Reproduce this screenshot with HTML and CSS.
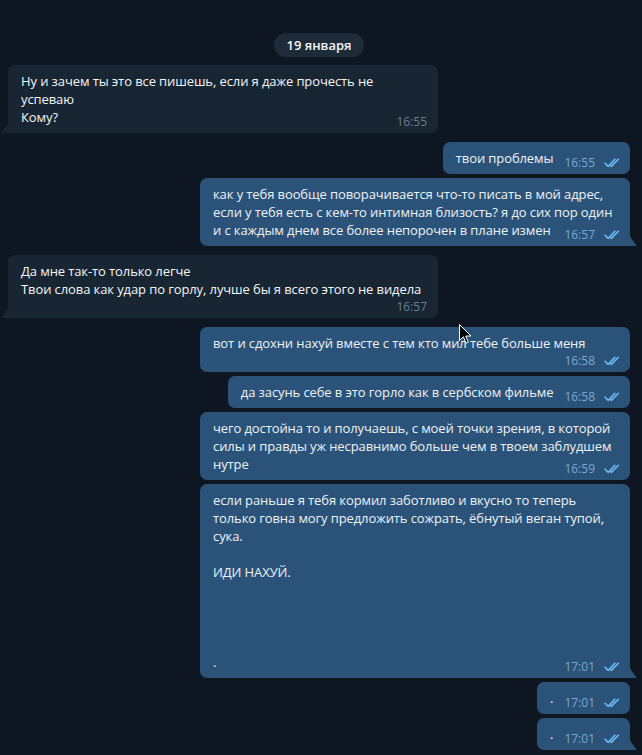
FILE: index.html
```
<!DOCTYPE html>
<html>
  <head>
    <meta charset="utf-8">
    <link rel="stylesheet" href="styles.css">
  </head>
  <body>
    <div class="chat">
      <div class="date"><span>19 января</span></div>

      <div class="msg in wide tail first">
        <p class="text">Ну и зачем ты это все пишешь, если я даже прочесть не<br>успеваю<br>Кому?<span class="meta"><span class="time">16:55</span></span></p>
      </div>

      <div class="msg out first">
        <p class="text">твои проблемы<span class="meta"><span class="time">16:55</span><svg class="check" viewBox="0 0 18 10"><path d="M1 5.2 L4.2 8.4 L10.8 1.4 M6.6 7.6 L7.4 8.4 L14.2 1.4"/></svg></span></p>
      </div>
      <div class="msg out wide tail">
        <p class="text">как у тебя вообще поворачивается что-то писать в мой адрес, если у тебя есть с кем-то интимная близость? я до сих пор один и с каждым днем все более непорочен в плане измен<span class="meta"><span class="time">16:57</span><svg class="check" viewBox="0 0 18 10"><path d="M1 5.2 L4.2 8.4 L10.8 1.4 M6.6 7.6 L7.4 8.4 L14.2 1.4"/></svg></span></p>
      </div>

      <div class="msg in wide tail first">
        <p class="text">Да мне так-то только легче<br>Твои слова как удар по горлу, лучше бы я всего этого не видела</p>
        <div class="meta-row"><span class="time">16:57</span></div>
      </div>

      <div class="msg out wide first">
        <p class="text">вот и сдохни нахуй вместе с тем кто мил тебе больше меня</p>
        <div class="meta-row"><span class="time">16:58</span><svg class="check" viewBox="0 0 18 10"><path d="M1 5.2 L4.2 8.4 L10.8 1.4 M6.6 7.6 L7.4 8.4 L14.2 1.4"/></svg></div>
      </div>
      <div class="msg out">
        <p class="text">да засунь себе в это горло как в сербском фильме<span class="meta"><span class="time">16:58</span><svg class="check" viewBox="0 0 18 10"><path d="M1 5.2 L4.2 8.4 L10.8 1.4 M6.6 7.6 L7.4 8.4 L14.2 1.4"/></svg></span></p>
      </div>
      <div class="msg out wide">
        <p class="text">чего достойна то и получаешь, с моей точки зрения, в которой силы и правды уж несравнимо больше чем в твоем заблудшем нутре<span class="meta"><span class="time">16:59</span><svg class="check" viewBox="0 0 18 10"><path d="M1 5.2 L4.2 8.4 L10.8 1.4 M6.6 7.6 L7.4 8.4 L14.2 1.4"/></svg></span></p>
      </div>
      <div class="msg out wide tail">
        <p class="text">если раньше я тебя кормил заботливо и вкусно то теперь только говна могу предложить сожрать, ёбнутый веган тупой, сука.<br><br>ИДИ НАХУЙ.<br><br><br><br><br>.<span class="meta"><span class="time">17:01</span><svg class="check" viewBox="0 0 18 10"><path d="M1 5.2 L4.2 8.4 L10.8 1.4 M6.6 7.6 L7.4 8.4 L14.2 1.4"/></svg></span></p>
      </div>
      <div class="msg out">
        <p class="text">.<span class="meta"><span class="time">17:01</span><svg class="check" viewBox="0 0 18 10"><path d="M1 5.2 L4.2 8.4 L10.8 1.4 M6.6 7.6 L7.4 8.4 L14.2 1.4"/></svg></span></p>
      </div>
      <div class="msg out tail">
        <p class="text">.<span class="meta"><span class="time">17:01</span><svg class="check" viewBox="0 0 18 10"><path d="M1 5.2 L4.2 8.4 L10.8 1.4 M6.6 7.6 L7.4 8.4 L14.2 1.4"/></svg></span></p>
      </div>
    </div>

    <svg class="cursor" viewBox="0 0 13 21" width="13" height="21">
      <path d="M0.5 0.5 L0.5 16.5 L4.4 12.8 L7 19.2 L9.3 18.2 L6.8 12 L12 12 Z"/>
    </svg>
  </body>
</html>
```

FILE: styles.css
```
body {
  margin: 0;
  min-height: 755px;
  background-color: #0e1621;
  font-family: "Open Sans", "Noto Sans", sans-serif;
  position: relative;
}

.chat {
  display: flex;
  flex-direction: column;
  padding: 33px 12px 0 8px;
}

.date {
  align-self: center;
  margin-bottom: 8px;
}

.date span {
  display: block;
  height: 24px;
  line-height: 24px;
  padding: 0 12px;
  border-radius: 12px;
  background-color: #1e2c3a;
  color: #f2f5f8;
  font-size: 13px;
  font-weight: 600;
}

.msg {
  position: relative;
  box-sizing: border-box;
  max-width: 430px;
  margin-top: 4px;
  padding: 7px 8px 7px 13px;
  border-radius: 7px;
  font-size: 13px;
  line-height: 18px;
  letter-spacing: -0.1px;
}

.msg.first {
  margin-top: 9px;
}

.date + .msg.first {
  margin-top: 0;
}

.msg.wide {
  width: 430px;
}

.msg.in {
  align-self: flex-start;
  background-color: #182533;
  color: #f5f5f5;
  padding-right: 11px;
}

.msg.out {
  align-self: flex-end;
  background-color: #2b5278;
  color: #edf2f7;
}

/* tail on the last bubble of a group */
.msg.tail::after {
  content: "";
  position: absolute;
  bottom: 0;
  width: 8px;
  height: 11px;
  background-color: inherit;
}

.msg.out.tail {
  border-bottom-right-radius: 0;
}

.msg.out.tail::after {
  right: -7px;
  clip-path: polygon(0 0, 0 100%, 100% 100%, 78% 82%);
}

.msg.in.tail {
  border-bottom-left-radius: 0;
}

.msg.in.tail::after {
  left: -7px;
  clip-path: polygon(100% 0, 100% 100%, 0 100%, 22% 82%);
}

.text {
  margin: 0;
  display: flow-root;
}

.meta {
  float: right;
  display: flex;
  align-items: center;
  height: 18px;
  margin: 5px 0 -5px 11px;
  letter-spacing: 0;
  white-space: nowrap;
}

.meta-row {
  display: flex;
  justify-content: flex-end;
  align-items: center;
  height: 14px;
  margin: 2px 0 -3px;
  letter-spacing: 0;
  white-space: nowrap;
}

.time {
  font-size: 12px;
  line-height: 14px;
}

.in .time {
  color: #6d7f8f;
}

.out .time {
  color: #7da8d3;
}

.check {
  width: 18px;
  height: 10px;
  margin-left: 9px;
  fill: none;
  stroke: #6ab7f5;
  stroke-width: 1.6;
  stroke-linecap: round;
  stroke-linejoin: round;
}

.cursor {
  position: absolute;
  left: 459px;
  top: 324px;
  fill: #000;
  stroke: #fff;
  stroke-width: 1;
}
```
